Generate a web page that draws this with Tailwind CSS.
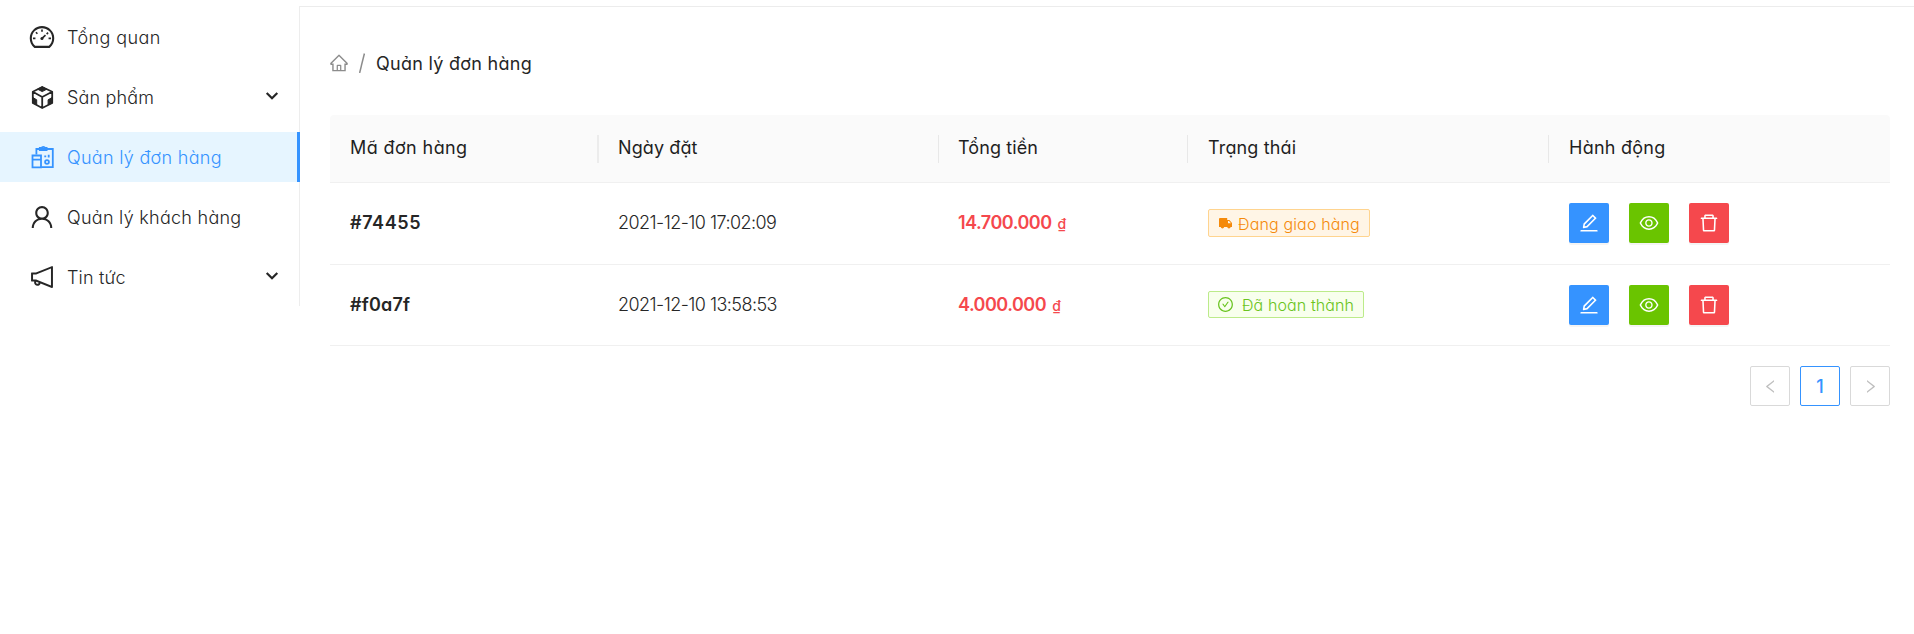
<!DOCTYPE html>
<html lang="vi">
<head>
<meta charset="utf-8">
<title>Quản lý đơn hàng</title>
<script src="https://cdn.jsdelivr.net/npm/@tailwindcss/browser@4"></script>
</head>
<body class="bg-white font-['Inter',sans-serif] text-[18px] font-light text-[#262626] [font-feature-settings:'cv11','ss03']">
<svg class="hidden">
  <defs>
    <symbol id="edit" viewBox="0 0 1024 1024"><path d="M257.7 752c2 0 4-.2 6-.5L431.9 722c2-.4 3.9-1.3 5.3-2.8l423.9-423.9a9.96 9.96 0 000-14.1L694.9 114.9c-1.9-1.9-4.4-2.9-7.1-2.9s-5.2 1-7.1 2.9L256.8 538.8c-1.5 1.5-2.4 3.3-2.8 5.3l-29.5 168.2a33.5 33.5 0 009.4 29.8c6.6 6.4 14.9 9.9 23.8 9.9zm67.4-174.4L687.8 215l73.3 73.3-362.7 362.6-88.9 15.7 15.6-89zM880 836H144c-17.7 0-32 14.3-32 32v36c0 4.4 3.6 8 8 8h784c4.4 0 8-3.6 8-8v-36c0-17.7-14.3-32-32-32z"/></symbol>
    <symbol id="eye" viewBox="0 0 1024 1024"><path d="M942.2 486.2C847.4 286.5 704.1 186 512 186c-192.2 0-335.4 100.5-430.2 300.3a60.3 60.3 0 000 51.5C176.6 737.5 319.9 838 512 838c192.2 0 335.4-100.5 430.2-300.3 7.7-16.2 7.7-35 0-51.5zM512 766c-161.3 0-279.4-81.8-362.7-254C232.6 339.8 350.7 258 512 258c161.3 0 279.4 81.8 362.7 254C791.5 684.2 673.4 766 512 766zm-4-430c-97.2 0-176 78.8-176 176s78.8 176 176 176 176-78.8 176-176-78.8-176-176-176zm0 288c-61.9 0-112-50.1-112-112s50.1-112 112-112 112 50.1 112 112-50.1 112-112 112z"/></symbol>
    <symbol id="trash" viewBox="0 0 1024 1024"><path d="M360 184h-8c4.4 0 8-3.6 8-8v8h304v-8c0 4.4 3.6 8 8 8h-8v72h72v-80c0-35.3-28.7-64-64-64H352c-35.3 0-64 28.7-64 64v80h72v-72zm504 72H160c-17.7 0-32 14.3-32 32v32c0 4.4 3.6 8 8 8h60.4l24.7 523c1.6 34.1 29.8 61 63.9 61h454c34.2 0 62.3-26.8 63.9-61l24.7-523H888c4.4 0 8-3.6 8-8v-32c0-17.7-14.3-32-32-32zM731.3 840H292.7l-24.2-512h487l-24.2 512z"/></symbol>
  </defs>
</svg>
<div class="flex items-start">
  <nav class="w-[300px] h-[306px] shrink-0 pt-3 flex flex-col gap-2.5 relative">
    <i class="absolute right-0 top-1.5 bottom-0 w-px bg-[#ededed]"></i>
    <a class="flex h-[50px] items-center pl-7 gap-[11px]"><svg class="size-7" viewBox="0 0 1024 1024" fill="currentColor"><path d="M924.8 385.6a446.7 446.7 0 00-96-142.4 446.7 446.7 0 00-142.4-96C631.1 123.8 572.5 112 512 112s-119.1 11.8-174.4 35.2a446.7 446.7 0 00-142.4 96 446.7 446.7 0 00-96 142.4C75.8 440.9 64 499.5 64 560c0 132.7 58.3 257.7 159.9 343.1l1.7 1.4c5.8 4.8 13.1 7.5 20.6 7.5h531.7c7.5 0 14.8-2.7 20.6-7.5l1.7-1.4C901.7 817.7 960 692.7 960 560c0-60.5-11.9-119.1-35.2-174.4zM761.4 836H262.6A371.12 371.12 0 01140 560c0-99.4 38.7-192.8 109-263 70.3-70.3 163.7-109 263-109 99.4 0 192.8 38.7 263 109 70.3 70.3 109 163.7 109 263 0 105.6-44.5 205.5-122.6 276z"/><path d="M512 240v80M290 338l54 54M182 560h90M752 560h90M512 560L640 442M682 404L734 352" stroke="currentColor" stroke-width="60"/><circle cx="510" cy="568" r="56"/></svg><span class="tracking-[0.42px]">Tổng quan</span></a>
    <a class="flex h-[50px] items-center pl-7 gap-[11px] pr-[21px]"><svg class="size-7" viewBox="0 0 28 28" fill="none" stroke="currentColor" stroke-width="1.8" stroke-linejoin="round"><path d="M14.2 4L24.2 8.8V20L14.2 25L4.8 20V8.8ZM4.8 8.8L14.2 14L24.2 8.8M14.2 14V25"/><path d="M14.2 3.8L18.8 6.2L14.2 8.6L9.6 6.2ZM4.8 14.5L8.7 16.8V21.8L4.8 20ZM24.2 14.5L20.1 16.8V21.8L24.2 20Z" fill="currentColor" stroke-width="1"/></svg><span class="tracking-[0.15px]">Sản phẩm</span><svg class="ml-auto w-[14px] h-[10px] relative -top-px" viewBox="0 0 14 10" fill="none" stroke="currentColor" stroke-width="2.2"><path d="M1.7 2L7 7.3L12.3 2"/></svg></a>
    <a class="flex h-[50px] items-center pl-7 gap-[11px] bg-[#e6f5ff] text-[#3593ff] border-r-[3px] border-[#3593ff] relative"><svg class="size-7" viewBox="0 0 28 28" fill="none" stroke="currentColor" stroke-width="1.8"><path d="M8.4 11.5V6H24.8V24.2H13.5M11.8 7V4.9H13.6C14 3.4 16.6 3.4 17 4.9H18.6V7Z"/><path d="M4.5 12.5H13V24.4H4.5ZM4.5 16.6H13"/><circle cx="19" cy="19" r="1.9"/><path d="M16.3 13.3H18.2M20.7 11.8V14.6"/></svg><span class="tracking-[0.3px]">Quản lý đơn hàng</span></a>
    <a class="flex h-[50px] items-center pl-7 gap-[11px]"><svg class="size-7" viewBox="0 0 1024 1024" fill="currentColor"><path d="M858.5 763.6a374 374 0 00-80.6-119.5 375.63 375.63 0 00-119.5-80.6c-.4-.2-.8-.3-1.2-.5C719.5 518 760 444.7 760 362c0-137-111-248-248-248S264 225 264 362c0 82.7 40.5 156 102.8 201.1-.4.2-.8.3-1.2.5-44.8 18.9-85 46-119.5 80.6a375.63 375.63 0 00-80.6 119.5A371.7 371.7 0 00136 901.8a8 8 0 008 8.2h60c4.4 0 7.9-3.5 8-7.8 2-77.2 33-149.5 87.8-204.3 56.7-56.7 132-87.9 212.2-87.9s155.5 31.2 212.2 87.9C779 752.7 810 825 812 902.2c.1 4.4 3.6 7.8 8 7.8h60a8 8 0 008-8.2c-1-47.8-10.9-94.3-29.5-138.2zM512 534c-45.9 0-89.1-17.9-121.6-50.4S340 407.9 340 362c0-45.9 17.9-89.1 50.4-121.6S466.1 190 512 190s89.1 17.9 121.6 50.4S684 316.1 684 362c0 45.9-17.9 89.1-50.4 121.6S557.9 534 512 534z"/></svg><span class="tracking-[0.27px]">Quản lý khách hàng</span></a>
    <a class="flex h-[50px] items-center pl-7 gap-[11px] pr-[21px]"><svg class="size-7" viewBox="0 0 1024 1024" fill="currentColor"><path d="M880 112c-3.8 0-7.7.7-11.6 2.3L292 345.9H128c-8.8 0-16 7.4-16 16.6v299c0 9.2 7.2 16.6 16 16.6h101.7c-3.7 11.6-5.7 23.9-5.7 36.4 0 65.9 53.8 119.5 120 119.5 55.4 0 102.1-37.6 115.9-88.4l408.6 164.2c3.9 1.5 7.8 2.3 11.6 2.3 16.9 0 32-14.2 32-33.2V145.2C912 126.2 897 112 880 112zM344 762.3c-26.5 0-48-21.4-48-47.8 0-11.2 3.9-21.9 11-30.4l84.9 34.1c-2 24.6-22.7 44.1-47.9 44.1zm496 58.4L318.8 611.3l-12.9-5.2H184V417.9h121.9l12.9-5.2L840 203.3v617.4z"/></svg><span class="tracking-[0.15px]">Tin tức</span><svg class="ml-auto w-[14px] h-[10px] relative -top-px" viewBox="0 0 14 10" fill="none" stroke="currentColor" stroke-width="2.2"><path d="M1.7 2L7 7.3L12.3 2"/></svg></a>
  </nav>
  <main class="grow mt-1.5 border-t border-[#ececec] pl-[30px] pr-6">
    <div class="flex items-center h-7 mt-[42px] font-normal"><svg class="size-5 -ml-px text-[#8c8c8c]" viewBox="0 0 1024 1024" fill="currentColor"><path d="M946.5 505L560.1 118.8l-25.9-25.9a31.5 31.5 0 00-44.4 0L77.5 505a63.9 63.9 0 00-18.8 46c.4 35.2 29.7 63.3 64.9 63.3h42.5V940h691.8V614.3h43.4c17.1 0 33.2-6.7 45.3-18.8a63.6 63.6 0 0018.7-45.3c0-17-6.7-33.1-18.8-45.2zM568 868H456V664h112v204zm217.9-325.7V868H632V640c0-22.1-17.9-40-40-40H432c-22.1 0-40 17.9-40 40v228H238.1V542.3h-96l370-369.7 23.1 23.1L882 542.3h-96.1z"/></svg><svg class="w-[6px] h-5 ml-[10px] mr-[11px] text-[#8c8c8c]" viewBox="0 0 6 20" stroke="currentColor" stroke-width="1.5"><path d="M.6 20L5.4 .5"/></svg><span class="tracking-[0.28px]">Quản lý đơn hàng</span></div>
    <div class="mt-[38px] grid grid-cols-[269px_340px_249px_361px_341px]">
      <div class="col-span-5 grid grid-cols-subgrid h-[68px] bg-[#fafafa] border-b border-[#f0f0f0] rounded-t-sm items-center font-normal [&>div]:h-7 [&>div]:flex [&>div]:items-center [&>div]:pl-5 [&_span]:pb-0.5 text-[#1f1f1f]">
        <div class="border-r-2 border-[#ececec]"><span class="tracking-[0.4px]">Mã đơn hàng</span></div><div class="border-r border-[#e8e8e8]"><span class="tracking-[0.1px] -ml-px">Ngày đặt</span></div><div class="border-r border-[#e8e8e8]"><span class="-ml-px tracking-[0.1px]">Tổng tiền</span></div><div class="border-r border-[#e8e8e8]"><span class="tracking-[0.15px]">Trạng thái</span></div><div><span class="tracking-[0.25px]">Hành động</span></div>
      </div>
      <div class="col-span-5 grid grid-cols-subgrid h-[82px] pb-px border-b border-[#f0f0f0] items-center [&>div]:pl-5">
        <div class="font-semibold pb-px"><span class="tracking-[0.6px]">#74455</span></div><div class="pb-px"><span class="tracking-[-0.55px] -ml-px">2021-12-10 17:02:09</span></div><div class="font-semibold text-[#f5484d] pb-px"><span class="tracking-[-0.5px] -ml-px">14.700.000 <small class="text-[14px] font-medium ml-0.5">₫</small></span></div>
        <div class="flex"><div class="flex h-7 w-[162px] items-center rounded-xs border border-[#ffd48f] bg-[#fff5e6] pl-[10px] text-[16px] text-[#f58a0a]"><svg class="w-[13px] h-[11px] mr-1.5" viewBox="0 0 13 11" fill="currentColor"><path fill-rule="evenodd" d="M1 0H8.2V2H10.4L13 5V9H11.7A1.8 1.8 0 0 1 8.2 9H5.2A1.8 1.8 0 0 1 1.7 9H0V1Q0 0 1 0ZM9 3V5.2H12L10 3Z"/></svg><span class="tracking-[0.15px] pt-px whitespace-nowrap">Đang giao hàng</span></div></div>
        <div class="flex gap-5 text-white"><b class="size-10 rounded-xs bg-[#3593ff] grid place-items-center shadow-[0_2px_0_rgba(0,0,0,0.045)]"><svg class="size-[22px]" fill="currentColor"><use href="#edit"/></svg></b><b class="size-10 rounded-xs bg-[#6ac400] grid place-items-center shadow-[0_2px_0_rgba(0,0,0,0.045)]"><svg class="size-[22px]" fill="currentColor"><use href="#eye"/></svg></b><b class="size-10 rounded-xs bg-[#f5484d] grid place-items-center shadow-[0_2px_0_rgba(0,0,0,0.045)]"><svg class="size-[22px]" fill="currentColor"><use href="#trash"/></svg></b></div>
      </div>
      <div class="col-span-5 grid grid-cols-subgrid h-[81px] border-b border-[#f0f0f0] items-center [&>div]:pl-5">
        <div class="font-semibold pb-0.5"><span class="tracking-[0.2px]">#f0a7f</span></div><div class="pb-0.5"><span class="tracking-[-0.55px] -ml-px">2021-12-10 13:58:53</span></div><div class="font-semibold text-[#f5484d] pb-0.5"><span class="tracking-[-0.5px] -ml-px">4.000.000 <small class="text-[14px] font-medium ml-0.5">₫</small></span></div>
        <div class="flex pb-px"><div class="flex h-[27px] w-[156px] items-center rounded-xs border border-[#bceb8a] bg-[#f8ffed] pl-[8px] text-[16px] text-[#6ac420]"><svg class="size-[17px] mr-2" viewBox="0 0 1024 1024" fill="currentColor"><path d="M699 353h-46.9c-10.2 0-19.9 4.9-25.9 13.3L469 584.3l-71.2-98.8c-6-8.3-15.6-13.3-25.9-13.3H325c-6.5 0-10.3 7.4-6.5 12.7l124.6 172.8a31.8 31.8 0 0051.7 0l210.6-292c3.9-5.3.1-12.7-6.4-12.7z"/><path d="M512 64C264.6 64 64 264.6 64 512s200.6 448 448 448 448-200.6 448-448S759.4 64 512 64zm0 820c-205.4 0-372-166.6-372-372s166.6-372 372-372 372 166.6 372 372-166.6 372-372 372z"/></svg><span class="tracking-[0.1px] whitespace-nowrap">Đã hoàn thành</span></div></div>
        <div class="flex gap-5 text-white"><b class="size-10 rounded-xs bg-[#3593ff] grid place-items-center shadow-[0_2px_0_rgba(0,0,0,0.045)]"><svg class="size-[22px]" fill="currentColor"><use href="#edit"/></svg></b><b class="size-10 rounded-xs bg-[#6ac400] grid place-items-center shadow-[0_2px_0_rgba(0,0,0,0.045)]"><svg class="size-[22px]" fill="currentColor"><use href="#eye"/></svg></b><b class="size-10 rounded-xs bg-[#f5484d] grid place-items-center shadow-[0_2px_0_rgba(0,0,0,0.045)]"><svg class="size-[22px]" fill="currentColor"><use href="#trash"/></svg></b></div>
      </div>
    </div>
    <div class="flex justify-end gap-2.5 mt-5 font-medium">
      <div class="size-10 rounded-xs border border-[#d9d9d9] grid place-items-center text-[#bfbfbf]"><svg class="size-[17px]" viewBox="0 0 1024 1024" fill="currentColor"><path d="M724 218.3V141c0-6.7-7.7-10.4-12.9-6.3L260.3 486.8a31.86 31.86 0 000 50.3l450.8 352.1c5.3 4.1 12.9.4 12.9-6.3v-77.3c0-4.9-2.3-9.6-6.1-12.6l-360-281 360-281.1c3.8-3 6.1-7.7 6.1-12.6z"/></svg></div>
      <div class="size-10 rounded-xs border border-[#3593ff] grid place-items-center pt-px text-[#3593ff]">1</div>
      <div class="size-10 rounded-xs border border-[#d9d9d9] grid place-items-center text-[#bfbfbf]"><svg class="size-[17px]" viewBox="0 0 1024 1024" fill="currentColor"><path d="M765.7 486.8L314.9 134.7A7.97 7.97 0 00302 141v77.3c0 4.9 2.3 9.6 6.1 12.6l360 281.1-360 281.1c-3.9 3-6.1 7.7-6.1 12.6V883c0 6.7 7.7 10.4 12.9 6.3l450.8-352.1a31.96 31.96 0 000-50.4z"/></svg></div>
    </div>
  </main>
</div>
</body>
</html>
